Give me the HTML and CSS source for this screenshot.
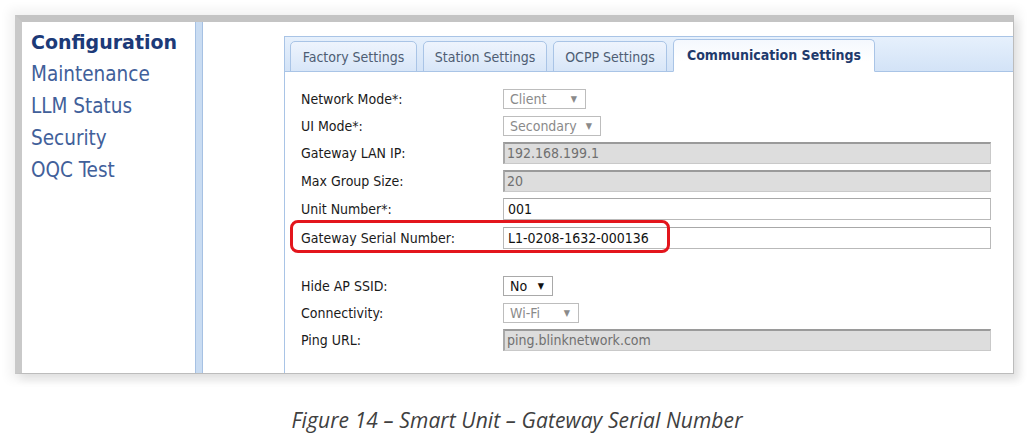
FILE: index.html
```html
<!DOCTYPE html>
<html>
<head>
<meta charset="utf-8">
<link rel="stylesheet" href="styles.css">
</head>
<body>
<div class="page">
  <div class="frame">
    <nav class="sidebar">
      <div class="nav-item active">Configuration</div>
      <div class="nav-item">Maintenance</div>
      <div class="nav-item">LLM Status</div>
      <div class="nav-item">Security</div>
      <div class="nav-item">OQC Test</div>
    </nav>
    <div class="separator"></div>
    <main class="content">
      <div class="panel">
        <div class="tabstrip">
          <div class="tab tab-factory">Factory Settings</div>
          <div class="tab tab-station">Station Settings</div>
          <div class="tab tab-ocpp">OCPP Settings</div>
          <div class="tab tab-comm active">Communication Settings</div>
        </div>
        <div class="form">
          <div class="row h27">
            <span class="label">Network Mode*:</span>
            <span class="select disabled w83">Client<span class="arrow">▼</span></span>
          </div>
          <div class="row h27">
            <span class="label">UI Mode*:</span>
            <span class="select disabled w98">Secondary<span class="arrow">▼</span></span>
          </div>
          <div class="row h27">
            <span class="label">Gateway LAN IP:</span>
            <span class="input disabled">192.168.199.1</span>
          </div>
          <div class="row h29">
            <span class="label">Max Group Size:</span>
            <span class="input disabled">20</span>
          </div>
          <div class="row h28">
            <span class="label">Unit Number*:</span>
            <span class="input">001</span>
          </div>
          <div class="row h29 highlight-row">
            <span class="label">Gateway Serial Number:</span>
            <span class="input">L1-0208-1632-000136</span>
            <span class="highlight"></span>
          </div>
          <div class="spacer"></div>
          <div class="row h27">
            <span class="label">Hide AP SSID:</span>
            <span class="select w50">No<span class="arrow">▼</span></span>
          </div>
          <div class="row h27">
            <span class="label">Connectivity:</span>
            <span class="select disabled w76">Wi-Fi<span class="arrow">▼</span></span>
          </div>
          <div class="row h27">
            <span class="label">Ping URL:</span>
            <span class="input disabled">ping.blinknetwork.com</span>
          </div>
        </div>
      </div>
    </main>
  </div>
  <p class="caption">Figure 14 – Smart Unit – Gateway Serial Number</p>
</div>
</body>
</html>
```

FILE: styles.css
```css
* { box-sizing: border-box; }
html, body {
  margin: 0;
  padding: 0;
  background: #ffffff;
}
body {
  width: 1034px;
  height: 441px;
  overflow: hidden;
  font-family: "DejaVu Sans", Tahoma, sans-serif;
}
.page {
  padding: 15px 0 0 15px;
}
.frame {
  width: 999px;
  height: 359px;
  display: flex;
  border-top: 7px solid #c4c4c4;
  border-left: 7px solid #c9c9c9;
  border-right: 1px solid #bcbcbc;
  border-bottom: 1px solid #bcbcbc;
  box-shadow: 0 0 10px 6px rgba(0, 0, 0, 0.05), 5px 6px 8px rgba(0, 0, 0, 0.08);
  background: #fff;
  overflow: hidden;
}
.sidebar {
  width: 173px;
  flex: none;
  padding: 4px 0 0 9px;
}
.nav-item {
  font-size: 20.5px;
  line-height: 32px;
  color: #41609a;
  font-stretch: condensed;
  white-space: nowrap;
}
.nav-item.active {
  font-weight: bold;
  font-size: 19px;
  font-stretch: normal;
  color: #1c3a78;
}
.separator {
  width: 8px;
  flex: none;
  background: #c9dcf2;
  border-left: 1px solid #a6c1e3;
  border-right: 1px solid #a6c1e3;
}
.content {
  flex: 1;
  padding: 14px 0 0 81px;
  min-width: 0;
}
.panel {
  height: 100%;
  border-left: 1px solid #a9c4e6;
  border-top: 1px solid #a9c4e6;
  font-size: 14px;
  font-stretch: condensed;
}
.tabstrip {
  height: 35px;
  display: flex;
  align-items: flex-end;
  gap: 6px;
  padding-left: 5px;
  background: linear-gradient(#e6f0fc, #d3e3f7);
  border-bottom: 1px solid #a9c4e6;
}
.tab {
  height: 31px;
  margin-bottom: -1px;
  border: 1px solid #a9c4e6;
  border-radius: 5px 5px 0 0;
  background: linear-gradient(#eef4fd, #d8e6f8);
  color: #4e5d73;
  display: flex;
  align-items: center;
  justify-content: center;
  white-space: nowrap;
}
.tab-factory { width: 127px; }
.tab-station { width: 124px; }
.tab-ocpp { width: 114px; }
.tab-comm { width: 202px; }
.tab.active {
  height: 33px;
  background: linear-gradient(#f4f8fe, #ffffff 70%);
  border-bottom-color: #ffffff;
  font-weight: bold;
  color: #1f3a6c;
  padding-bottom: 2px;
}
.form {
  padding: 13px 0 0 16px;
}
.row {
  display: flex;
  align-items: center;
  position: relative;
}
.h27 { height: 27px; }
.h28 { height: 28px; }
.h29 { height: 29px; }
.spacer { height: 20px; }
.label {
  width: 202px;
  flex: none;
  color: #1a1a1a;
  white-space: nowrap;
}
.input {
  width: 488px;
  height: 22px;
  border: 1px solid #b9b9b9;
  border-top-color: #a8a8a8;
  padding: 0 4px;
  display: flex;
  align-items: center;
  color: #111;
  background: #fff;
  white-space: nowrap;
}
.input.disabled {
  background: #dddddd;
  color: #707070;
  border-color: #c9c9c9;
  border-top: 2px solid #9a9a9a;
  border-left: 2px solid #a9a9a9;
  padding-left: 2px;
}
.select {
  height: 20px;
  border: 1px solid #a9a9a9;
  background: #fff;
  display: flex;
  align-items: center;
  padding: 0 0 0 6px;
  color: #111;
  position: relative;
  white-space: nowrap;
}
.select.disabled {
  color: #8a8a8a;
  border-color: #bdbdbd;
}
.arrow {
  position: absolute;
  right: 8px;
  top: 3px;
  font-size: 9px;
  line-height: 12px;
  color: #111;
}
.select.disabled .arrow { color: #8a8a8a; }
.w83 { width: 83px; }
.w98 { width: 98px; }
.w50 { width: 50px; }
.w76 { width: 76px; }
.highlight {
  position: absolute;
  left: -11px;
  top: -3px;
  width: 380px;
  height: 33px;
  border: 3.5px solid #e3151c;
  border-radius: 8px;
  pointer-events: none;
}
.caption {
  margin: 32px 0 0 0;
  text-align: center;
  padding-right: 15px;
  font-family: "Open Sans", "DejaVu Sans", sans-serif;
  font-style: italic;
  font-size: 21px;
  color: #404040;
  letter-spacing: 0.1px;
}
```
